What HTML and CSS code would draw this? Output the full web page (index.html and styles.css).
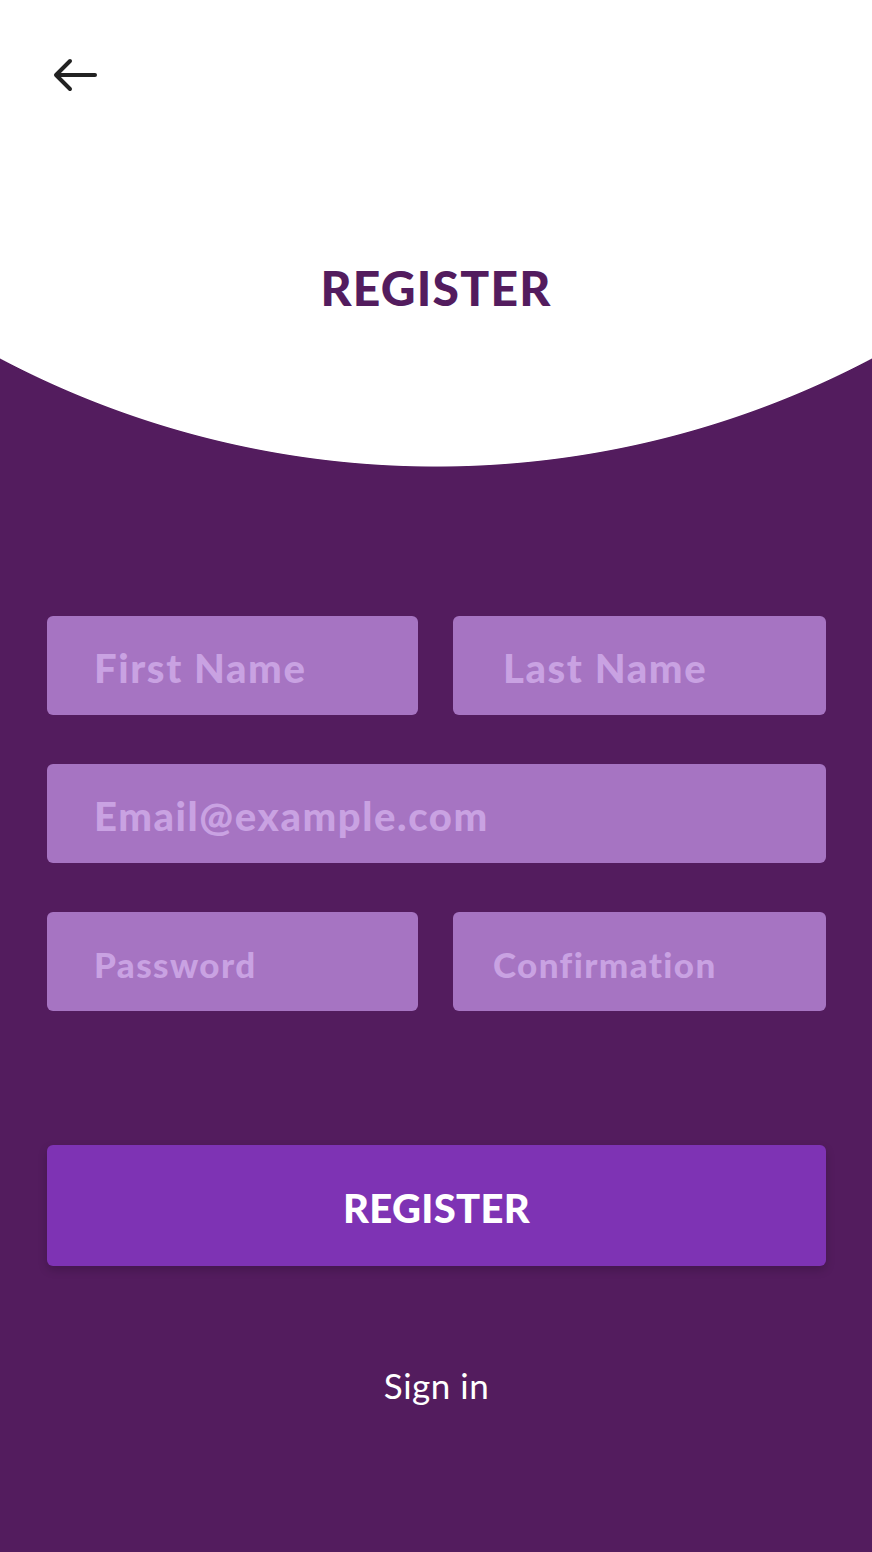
FILE: index.html
```html
<!DOCTYPE html>
<html lang="en">
<head>
<meta charset="utf-8">
<title>Register</title>
<link rel="stylesheet" href="styles.css">
</head>
<body>
<div class="screen">
  <header class="hero">
    <button class="back" aria-label="Back">
      <svg width="46" height="36" viewBox="0 0 46 36" fill="none" stroke="#222" stroke-width="4" stroke-linecap="round" stroke-linejoin="round">
        <path d="M43 18H5"/>
        <path d="M18 4L4 18L18 32"/>
      </svg>
    </button>
    <h1 class="title">REGISTER</h1>
  </header>
  <main class="form">
    <div class="row two">
      <div class="field"><span class="ph">First Name</span></div>
      <div class="field pad-l50"><span class="ph">Last Name</span></div>
    </div>
    <div class="row">
      <div class="field"><span class="ph">Email@example.com</span></div>
    </div>
    <div class="row two last">
      <div class="field small"><span class="ph">Password</span></div>
      <div class="field small pad-l40"><span class="ph">Confirmation</span></div>
    </div>
    <button class="submit">REGISTER</button>
    <a class="signin">Sign in</a>
  </main>
</div>
</body>
</html>
```
FILE: styles.css
```css
* { box-sizing: border-box; }
html, body { margin: 0; padding: 0; }
body {
  background: #531c5e;
  font-family: "Lato", "Noto Sans", sans-serif;
  width: 872px;
  height: 1552px;
  overflow: hidden;
}
.screen { width: 872px; height: 1552px; position: relative; }
.hero {
  height: 468px;
  background: radial-gradient(circle 934px at 436px -467px, #ffffff 99.9%, #531c5e 100%);
  position: relative;
  padding-top: 1px;
}
.back {
  position: absolute;
  left: 52px;
  top: 57px;
  background: none;
  border: 0;
  padding: 0;
  display: block;
}
.back svg { display: block; }
.title {
  margin: 257px 0 0 0;
  text-align: center;
  color: #531c5e;
  font-weight: 900;
  font-size: 48px;
  line-height: 60px;
  letter-spacing: 1.2px;
}
.form {
  padding: 148px 46px 0 47px;
  display: flex;
  flex-direction: column;
}
.row {
  display: grid;
  grid-template-columns: 1fr;
  gap: 35px;
  margin-bottom: 49px;
}
.row.two { grid-template-columns: 371px 1fr; }
.row.last { margin-bottom: 134px; }
.field {
  height: 99px;
  background: #a674c2;
  border-radius: 6px;
  display: flex;
  align-items: center;
  padding-left: 47px;
  overflow: hidden;
  white-space: nowrap;
}
.field.pad-l50 { padding-left: 50px; }
.field.pad-l40 { padding-left: 40px; }
.ph {
  color: #c9a2e2;
  font-weight: 900;
  font-size: 40px;
  letter-spacing: 1.6px;
  margin-top: 4px;
}
.field.small .ph { font-size: 35px; letter-spacing: 1.4px; }
.submit {
  height: 121px;
  background: #7e33b4;
  border: 0;
  border-radius: 6px;
  color: #fff;
  font-family: inherit;
  font-weight: 900;
  font-size: 40px;
  letter-spacing: 0.3px;
  box-shadow: 0 4px 10px rgba(0,0,0,0.18);
  width: 779px;
  padding-top: 6px;
}
.signin {
  display: block;
  text-align: center;
  color: #fff;
  font-size: 35px;
  letter-spacing: 0.5px;
  margin-top: 99px;
  line-height: 40px;
}
```
